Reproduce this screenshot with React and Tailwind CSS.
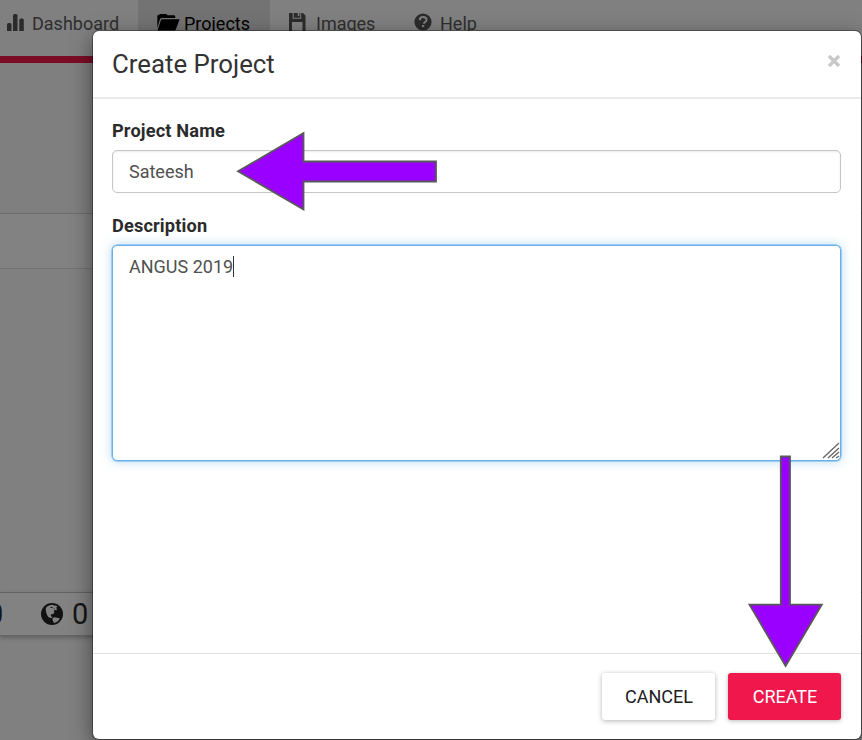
import React from "react";

function StatsIcon() {
  return (
    <svg width="17" height="17" viewBox="0 0 17 17" fill="#2b2b2b" className="shrink-0">
      <path d="M0 17V10.500a1.500 1.500 0 0 1 1.500-1.500h1.500a1.500 1.500 0 0 1 1.500 1.500V17zM6 17V1.500A1.500 1.500 0 0 1 7.500 0h1.500a1.500 1.500 0 0 1 1.500 1.500V17zM12.300 17V6a1.500 1.500 0 0 1 1.500-1.500h1.500a1.500 1.500 0 0 1 1.500 1.500V17z" />
    </svg>
  );
}

function FolderIcon() {
  return (
    <svg width="23" height="18" viewBox="0 0 23 18" fill="#000" className="shrink-0">
      <path d="M0.300 14V1.300h1.400L2.800 0h6.400l1.400 1.300h6.400q1.200 0 1.200 1v1.700H4.500q-1 0-1.500 1z" />
      <path d="M4.800 5.200H22.600L18.800 15.500q-.4 1-1.400 1H0.500L4 5.900q.2-.7.800-.7z" />
    </svg>
  );
}

function FloppyIcon() {
  return (
    <svg width="17" height="18" viewBox="0 0 17 18" fill="#2b2b2b" className="shrink-0">
      <path fillRule="evenodd" d="M0 0h3.700v5.700h8.500V0h1.700L16.500 2.500V18H0zM3 9V18h10.500V9z" />
      <path fillRule="evenodd" d="M4.700 0h6.500v4.700H4.700zM8.800 0v3h1.500V0z" />
    </svg>
  );
}

function HelpIcon() {
  return (
    <svg width="18" height="18" viewBox="0 0 18 18" className="shrink-0">
      <circle cx="9" cy="9" r="8.600" fill="#2b2b2b" />
      <path d="M5.800 7.200C5.800 4.900 7.100 3.900 9.100 3.900s3.400 1.100 3.400 2.800c0 1.400-.8 2-1.700 2.600-.7.500-.8.900-.8 1.500" fill="none" stroke="#7e7e7e" strokeWidth="2" />
      <path d="M8 12h2.200v2.100H8z" fill="#7e7e7e" />
    </svg>
  );
}

function GlobeIcon() {
  return (
    <svg width="22" height="22" viewBox="0 0 22 22" className="shrink-0">
      <circle cx="11" cy="11" r="11" fill="#111" />
      <path d="M5.500 3.900L8 2.400l3.400-.6 1.800.7 2.400.2.800 1.400-1.600.7 1.300 1.200-.8 1.200-1.900-.1-.6 1.300.6 1.200-1.200 1.400-1.900.3-.6 1.100.4 1 1.300.4-.2 1-1.700.2-2.300-1.100L5.600 11 5 8.200 4.600 6z" fill="#828282" />
      <path d="M11.200 15.700l1.800-1.500 2.200.2 1.700.7 1.900.2-1.200 2.100-2.300 1.900-2.300.8-.9-1.900z" fill="#828282" />
      <path d="M9.600 4.100h2v.9h-2zM12.700 5.200l1.300.5-1 .8z" fill="#111" />
    </svg>
  );
}

function Page() {
  return (
    <div className="h-full w-full bg-[#808080] text-[#2e2e2e]">
      <nav className="flex h-[56px] text-[18px] leading-[24px]">
        <div className="flex w-[138px] gap-[8px] pl-[7px] pt-[12px]">
          <div className="pt-[2px]"><StatsIcon /></div>
          <span>Dashboard</span>
        </div>
        <div className="flex w-[132px] gap-[4px] bg-[#737373] pl-[19px] pt-[12px] text-black">
          <div className="pt-[2px]"><FolderIcon /></div>
          <span>Projects</span>
        </div>
        <div className="flex w-[126px] gap-[10px] pl-[19px] pt-[12px]">
          <div className="pt-px"><FloppyIcon /></div>
          <span>Images</span>
        </div>
        <div className="flex gap-[8px] pl-[18px] pt-[12px]">
          <div className="pt-px"><HelpIcon /></div>
          <span>Help</span>
        </div>
      </nav>
      <div className="h-[7px] bg-[#7c0c26]" />
      <div className="h-[151px] border-b border-[#6d6d6d] bg-[#7f7f7f]" />
      <div className="h-[55px] border-b border-[#737373] bg-[#828282]" />
      <div className="h-[323px]" />
      <div className="flex h-[44px] items-center border-y border-t-[#626262] border-b-[#666666] bg-[#828282] text-[29px] text-[#151515] shadow-[0_2px_4px_rgba(0,0,0,0.25)]">
        <span className="-ml-[13px] w-[54px] pt-px">0</span>
        <GlobeIcon />
        <span className="ml-[9px] pt-px">0</span>
      </div>
    </div>
  );
}

function Dialog() {
  return (
    <section className="absolute left-[93px] top-[31px] flex h-[708px] w-[768px] flex-col rounded-[6px] bg-white shadow-[0_0_0_1px_rgba(0,0,0,0.32),0_7px_22px_rgba(0,0,0,0.5)]">
      <header className="flex h-[68px] shrink-0 justify-between border-b-2 border-[#ebebeb] pl-[19px] pr-[19px]">
        <h1 className="pt-[17px] text-[25.800px] leading-[32px] text-[#333]">Create Project</h1>
        <button className="mt-[23px] h-[14px]" aria-label="Close">
          <svg width="16" height="14" viewBox="0 0 16 14"><path d="M3 2l10 10M13 2L3 12" stroke="#c8c8c8" strokeWidth="3.200" /></svg>
        </button>
      </header>
      <main className="flex grow flex-col pl-[19px] pr-[20px] text-[18px]">
        <label className="mt-[20px] text-[18.200px] font-bold leading-[24px] tracking-[0.150px] text-[#2b2b2b]">Project Name</label>
        <div className="mt-[7px] flex h-[43px] items-center rounded-[5px] border border-[#c6c6c6] px-[16px] text-[#505050] shadow-[inset_0_1px_2px_rgba(0,0,0,0.08)]">Sateesh</div>
        <label className="mt-[21px] text-[18.200px] font-bold leading-[24px] tracking-[0.150px] text-[#2b2b2b]">Description</label>
        <div className="relative mt-[7px] flex h-[216px] items-start rounded-[5px] border border-[#66afe9] px-[16px] pt-[9px] text-[#505050] shadow-[0_0_0_0.500px_#66afe9,0_0_11px_rgba(102,175,233,0.5)]">
          <span className="leading-[24px]">ANGUS 2019</span>
          <span className="mt-px h-[21px] w-px bg-[#333]" />
          <svg className="absolute bottom-[1px] right-0" width="18" height="17" viewBox="0 0 18 17">
            <path d="M1 16L17 1M6 16L17 6M10 16L17 10M14 16L17 14" fill="none" stroke="#666" strokeWidth="1.300" />
          </svg>
        </div>
      </main>
      <footer className="flex h-[86px] shrink-0 justify-end gap-[13px] border-t border-[#e2e2e2] pr-[20px] pt-[19px] text-[18px]">
        <button className="h-[47px] w-[113px] rounded-[3px] bg-white pl-px text-[#202020] shadow-[0_1px_5px_rgba(0,0,0,0.3)]">CANCEL</button>
        <button className="h-[47px] w-[113px] rounded-[3px] bg-[#ef174b] pl-px text-white shadow-[0_1px_4px_rgba(0,0,0,0.28)]">CREATE</button>
      </footer>
    </section>
  );
}

export default function App() {
  return (
    <div className="relative h-[740px] w-[862px] overflow-hidden font-[Roboto,sans-serif]">
      <Page />
      <Dialog />
      <svg className="absolute left-0 top-0" width="862" height="740" fill="#9900ff" stroke="#595959" strokeWidth="1.800">
        <path d="M238 171.300L303.500 133V161.500H436V181.500H303.500V209.500Z" />
        <path d="M780.800 456.500H790V604.700H821.800L785.600 666L749.500 604.700H780.800Z" />
      </svg>
    </div>
  );
}
